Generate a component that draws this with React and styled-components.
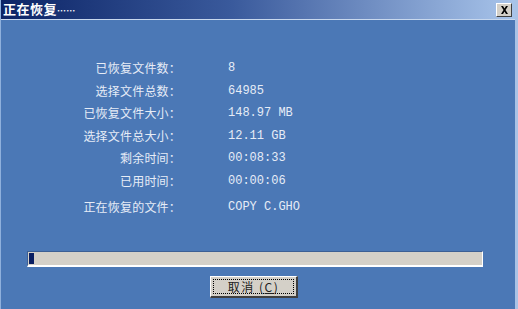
import React from "react";
import styled, { createGlobalStyle } from "styled-components";

const GlobalStyle = createGlobalStyle`
  html, body {
    margin: 0;
    padding: 0;
    background: #4b78b6;
  }
`;

const cjk = `"Noto Sans CJK SC", "DejaVu Sans", sans-serif`;

const Window = styled.div`
  width: 518px;
  height: 309px;
  box-sizing: border-box;
  display: flex;
  flex-direction: column;
  background: #4b78b6;
  border-left: 1px solid #8fb0dc;
  border-right: 3px solid #a9c3e6;
  overflow: hidden;
`;

const TitleBar = styled.div`
  height: 19px;
  display: flex;
  align-items: center;
  justify-content: space-between;
  padding: 0 3px 0 2px;
  background: linear-gradient(to right, #0c2466 0%, #3a5a9c 45%, #a8c4ea 100%);
  border-bottom: 1px solid #c8d8ee;
`;

const Title = styled.span`
  font-family: ${cjk};
  font-weight: 700;
  font-size: 13px;
  line-height: 19px;
  color: #ffffff;
  letter-spacing: 0.5px;
`;

const Dots = styled.span`
  font-size: 9px;
  letter-spacing: 0.3px;
`;

const CloseButton = styled.div`
  width: 16px;
  height: 14px;
  box-sizing: border-box;
  display: flex;
  align-items: center;
  justify-content: center;
  background: #d4d0c8;
  border-top: 1px solid #ffffff;
  border-left: 1px solid #ffffff;
  border-right: 1px solid #404040;
  border-bottom: 1px solid #404040;
`;

const Info = styled.div`
  display: grid;
  grid-template-columns: 180px auto;
  column-gap: 47px;
  padding-top: 37px;
`;

const Label = styled.div`
  font-family: ${cjk};
  font-size: 12px;
  line-height: 22.5px;
  color: #e6ecf6;
  text-align: right;
  letter-spacing: 0.2px;
  margin-top: ${(p) => (p.$gap ? "4px" : "0")};
`;

const Value = styled.div`
  font-family: "Liberation Mono", "DejaVu Sans Mono", monospace;
  font-size: 12px;
  line-height: 22.5px;
  color: #e6ecf6;
  margin-top: ${(p) => (p.$gap ? "4px" : "0")};
`;

const Progress = styled.div`
  margin: 32px 32px 0 26px;
  height: 16px;
  box-sizing: border-box;
  background: #d4d0c8;
  border-top: 1px solid #3c5f94;
  border-left: 1px solid #3c5f94;
  border-right: 1px solid #ffffff;
  border-bottom: 2px solid #ffffff;
  padding: 1px;
`;

const ProgressFill = styled.div`
  height: 100%;
  background: #0a1f62;
`;

const ButtonRow = styled.div`
  display: flex;
  padding-left: 209px;
  margin-top: 9px;
`;

const Button = styled.div`
  width: 88px;
  height: 22px;
  box-sizing: border-box;
  background: #d4d0c8;
  border-top: 1px solid #ffffff;
  border-left: 1px solid #ffffff;
  border-right: 2px solid #404040;
  border-bottom: 2px solid #404040;
  padding: 2px;
`;

const Focus = styled.div`
  height: 100%;
  box-sizing: border-box;
  border: 1px dotted #000000;
  display: flex;
  align-items: center;
  justify-content: center;
  font-family: ${cjk};
  font-size: 12px;
  color: #202020;
  letter-spacing: 1.5px;
`;

const rows = [
  ["已恢复文件数：", "8"],
  ["选择文件总数：", "64985"],
  ["已恢复文件大小：", "148.97 MB"],
  ["选择文件总大小：", "12.11 GB"],
  ["剩余时间：", "00:08:33"],
  ["已用时间：", "00:00:06"],
  ["正在恢复的文件：", "COPY C.GHO", true],
];

export default function App() {
  return (
    <>
      <GlobalStyle />
      <Window>
        <TitleBar>
          <Title>
            正在恢复<Dots>……</Dots>
          </Title>
          <CloseButton>
            <svg width="9" height="8" viewBox="0 0 9 8">
              <path d="M1 0h2l1.5 2.5L6 0h2L5.5 4 8 8H6L4.5 5.5 3 8H1l2.5-4z" fill="#000" />
            </svg>
          </CloseButton>
        </TitleBar>
        <Info>
          {rows.map(([label, value, gap]) => (
            <React.Fragment key={label}>
              <Label $gap={gap}>{label}</Label>
              <Value $gap={gap}>{value}</Value>
            </React.Fragment>
          ))}
        </Info>
        <Progress>
          <ProgressFill style={{ width: `${(8 / 64985) * 100 + 1.1}%` }} />
        </Progress>
        <ButtonRow>
          <Button>
            <Focus>
              取消 (<u>C</u>)
            </Focus>
          </Button>
        </ButtonRow>
      </Window>
    </>
  );
}
